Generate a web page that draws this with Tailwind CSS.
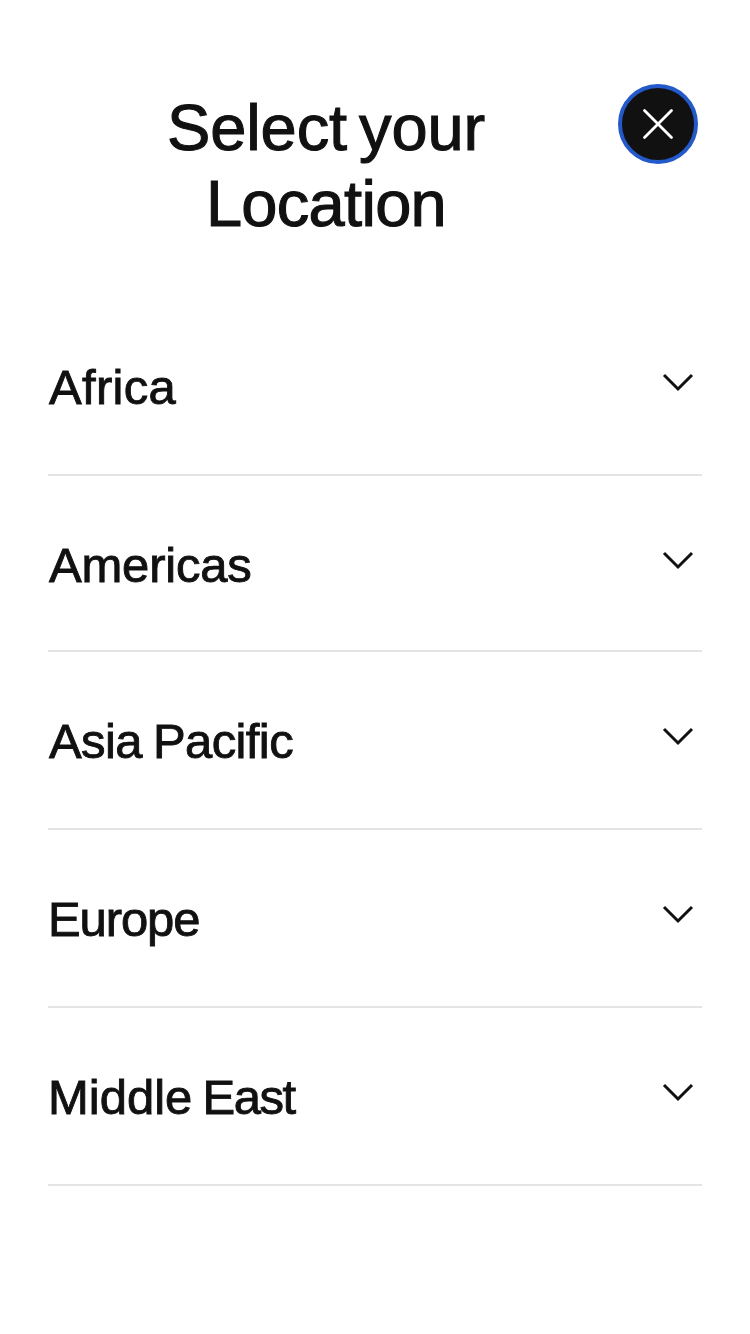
<!DOCTYPE html>
<html lang="en">
<head>
<meta charset="utf-8">
<title>Select your Location</title>
<script src="https://cdn.jsdelivr.net/npm/@tailwindcss/browser@4"></script>
</head>
<body class="min-h-[1334px] overflow-hidden bg-white px-12 pt-[84px] font-['Liberation_Sans',Arial,sans-serif] text-[#111112]">
<header class="flex h-[214px] items-start">
  <h1 class="mt-[6px] w-[556px] text-center text-[65px] leading-[76px] [-webkit-text-stroke:1.1px_#111112]"><span class="block tracking-[-0.1px] [word-spacing:-6px]">Select your</span><span class="block tracking-[-0.7px]">Location</span></h1>
  <button aria-label="Close" class="ml-[14px] flex size-20 items-center justify-center rounded-full border-4 border-[#2459c9] bg-[#111112]">
    <svg class="size-8" viewBox="0 0 32 32" fill="none" stroke="#fff" stroke-width="2.8" stroke-linecap="round"><path d="M2.5 2.5 29.5 29.5M29.5 2.5 2.5 29.5"/></svg>
  </button>
</header>
<main class="text-[49px] leading-[58px] [-webkit-text-stroke:0.9px_#111112]">
  <section class="flex h-[178px] items-start justify-between border-b-2 border-[#e4e4e4] pt-[60px]"><h2 class="pl-px tracking-[0.3px]">Africa</h2><svg class="mt-[14px] mr-2 h-[20px] w-8" viewBox="0 0 32 20" fill="none" stroke="#111112" stroke-width="3"><path d="M2 3 16 17 30 3"/></svg></section>
  <section class="flex h-[176px] items-start justify-between border-b-2 border-[#e4e4e4] pt-[60px]"><h2 class="pl-px tracking-[-0.2px]">Americas</h2><svg class="mt-[14px] mr-2 h-[20px] w-8" viewBox="0 0 32 20" fill="none" stroke="#111112" stroke-width="3"><path d="M2 3 16 17 30 3"/></svg></section>
  <section class="flex h-[178px] items-start justify-between border-b-2 border-[#e4e4e4] pt-[60px]"><h2 class="pl-px tracking-[-0.6px] [word-spacing:-2px]">Asia Pacific</h2><svg class="mt-[14px] mr-2 h-[20px] w-8" viewBox="0 0 32 20" fill="none" stroke="#111112" stroke-width="3"><path d="M2 3 16 17 30 3"/></svg></section>
  <section class="flex h-[178px] items-start justify-between border-b-2 border-[#e4e4e4] pt-[60px]"><h2 class="tracking-[-1.1px]">Europe</h2><svg class="mt-[14px] mr-2 h-[20px] w-8" viewBox="0 0 32 20" fill="none" stroke="#111112" stroke-width="3"><path d="M2 3 16 17 30 3"/></svg></section>
  <section class="flex h-[178px] items-start justify-between border-b-2 border-[#e4e4e4] pt-[60px]"><h2 class="tracking-[-1.5px] [word-spacing:-2px]"><span class="tracking-[0px]">Middle</span> East</h2><svg class="mt-[14px] mr-2 h-[20px] w-8" viewBox="0 0 32 20" fill="none" stroke="#111112" stroke-width="3"><path d="M2 3 16 17 30 3"/></svg></section>
</main>
</body>
</html>
